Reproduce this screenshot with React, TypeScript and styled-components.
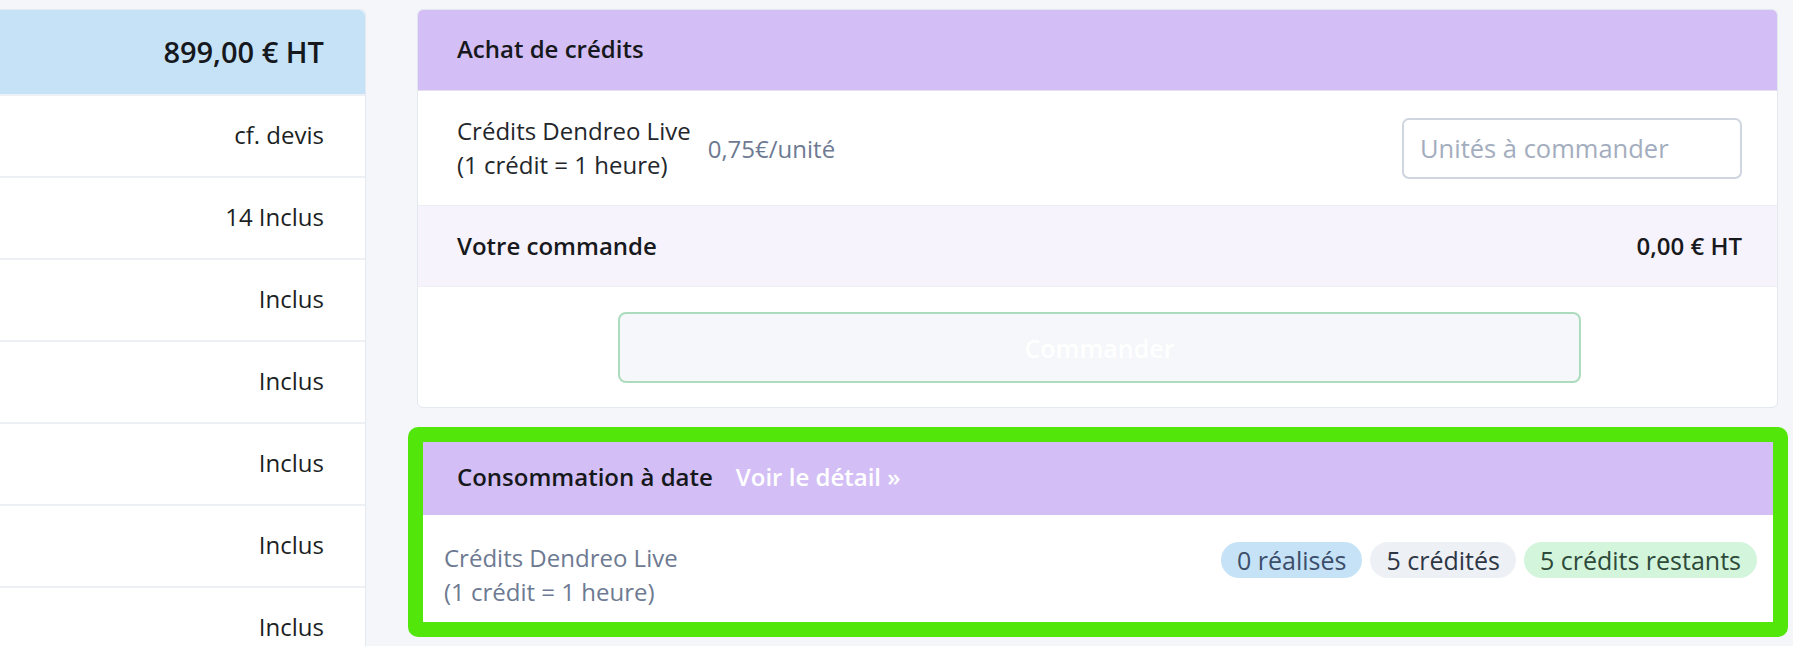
import styled, { createGlobalStyle } from "styled-components"

const GlobalStyle = createGlobalStyle`
  html, body {
    margin: 0;
    padding: 0;
    background: #f4f6f9;
    font-family: "Open Sans", "Noto Sans", Arial, sans-serif;
    color: #1f2329;
    overflow: hidden;
  }
  #root {
    height: 646px;
    overflow: hidden;
  }
`

const Page = styled.div`
  display: flex;
  align-items: flex-start;
  gap: 42px;
  padding-top: 9px;
`

const Tarifs = styled.section`
  width: 365px;
  flex-shrink: 0;
  background: #ffffff;
  border: 1px solid #e3e9f0;
  border-left: none;
  border-radius: 0 6px 0 0;
`

const TarifEntete = styled.div`
  height: 84px;
  box-sizing: border-box;
  background: #c6e2f6;
  display: flex;
  align-items: center;
  justify-content: flex-end;
  padding: 0 41px 2px 0;
  font-size: 29px;
  font-weight: 600;
  color: #15181c;
  border-radius: 0 6px 0 0;
`

const TarifLigne = styled.div`
  height: 80px;
  box-sizing: content-box;
  border-top: 2px solid #edf1f5;
  display: flex;
  align-items: center;
  justify-content: flex-end;
  padding-right: 41px;
  font-size: 24px;
  color: #1c1f24;
  & > span {
    margin-bottom: 4px;
  }
`

const Colonne = styled.div`
  width: 1380px;
  display: flex;
  flex-direction: column;
`

const Carte = styled.section`
  margin: 0 10px 0 9px;
  background: #ffffff;
  border: 1px solid #e4e8ef;
  border-radius: 6px;
  overflow: hidden;
`

const Entete = styled.div`
  height: 81px;
  box-sizing: border-box;
  background: #d3bff5;
  display: flex;
  align-items: center;
  padding: 0 0 4px 39px;
  font-size: 24px;
  font-weight: 600;
  color: #16181c;
  border-bottom: 1px solid #e3e1ef;
`

const LigneProduit = styled.div`
  height: 114px;
  display: flex;
  align-items: center;
  padding: 0 35px 0 39px;
`

const Libelle = styled.div<{ $muet?: boolean }>`
  font-size: 24px;
  line-height: 34px;
  color: ${p => (p.$muet ? "#6d7a92" : "#23262b")};
`

const Prix = styled.span`
  margin-left: 17px;
  font-size: 24px;
  color: #6d7a92;
`

const Champ = styled.input`
  margin-left: auto;
  width: 340px;
  height: 61px;
  box-sizing: border-box;
  border: 2px solid #cfd6e0;
  border-radius: 7px;
  padding: 0 0 0 16px;
  font-family: inherit;
  font-size: 25.5px;
  background: #ffffff;
  outline: none;
  &::placeholder {
    color: #a3adbe;
  }
`

const LigneTotal = styled.div`
  height: 81px;
  box-sizing: border-box;
  background: #f6f3fc;
  border-top: 1px solid #eceef4;
  display: flex;
  align-items: center;
  justify-content: space-between;
  padding: 0 35px 2px 39px;
  font-size: 24px;
  font-weight: 600;
  color: #17191d;
`

const ZoneBouton = styled.div`
  height: 121px;
  border-top: 1px solid #eef0f4;
  box-sizing: border-box;
  display: flex;
  justify-content: center;
  padding: 25px 0 0 4px;
`

const Bouton = styled.button`
  width: 963px;
  height: 71px;
  background: #f5f7fa;
  border: 2px solid #acdcbd;
  border-radius: 8px;
  color: #ffffff;
  font-family: inherit;
  font-size: 25px;
  font-weight: 600;
`

const Encadre = styled.section`
  margin-top: 19px;
  border: 15px solid #52e60a;
  border-radius: 10px;
  background: #ffffff;
`

const EnteteConso = styled.div`
  height: 73px;
  box-sizing: border-box;
  background: #d3bff5;
  display: flex;
  align-items: center;
  padding: 0 0 5px 34px;
  font-size: 24px;
  font-weight: 600;
  color: #16181c;
`

const Lien = styled.a`
  margin-left: 23px;
  color: #ffffff;
  text-decoration: none;
`

const CorpsConso = styled.div`
  height: 107px;
  box-sizing: border-box;
  display: flex;
  align-items: flex-start;
  justify-content: space-between;
  padding: 26px 16px 0 21px;
`

const Pastilles = styled.div`
  display: flex;
  gap: 8px;
  margin-top: 1px;
`

const tons = {
  bleu: { fond: "#c6e2f6", texte: "#3c4e6a" },
  gris: { fond: "#edf0f5", texte: "#2e3645" },
  vert: { fond: "#d3f5dc", texte: "#2e4a39" },
}

const Pastille = styled.span<{ $ton: keyof typeof tons }>`
  height: 36px;
  display: flex;
  align-items: center;
  padding: 0 16px;
  border-radius: 18px;
  font-size: 25px;
  background: ${p => tons[p.$ton].fond};
  color: ${p => tons[p.$ton].texte};
`

const lignes = ["cf. devis", "14 Inclus", "Inclus", "Inclus", "Inclus", "Inclus", "Inclus"]

export default function App() {
  return (
    <>
      <GlobalStyle />
      <Page>
        <Tarifs>
          <TarifEntete>899,00 € HT</TarifEntete>
          {lignes.map((l, i) => (
            <TarifLigne key={i}>
              <span>{l}</span>
            </TarifLigne>
          ))}
        </Tarifs>
        <Colonne>
          <Carte>
            <Entete>Achat de crédits</Entete>
            <LigneProduit>
              <Libelle>
                Crédits Dendreo Live
                <br />
                (1 crédit = 1 heure)
              </Libelle>
              <Prix>0,75€/unité</Prix>
              <Champ placeholder="Unités à commander" />
            </LigneProduit>
            <LigneTotal>
              <span>Votre commande</span>
              <span>0,00 € HT</span>
            </LigneTotal>
            <ZoneBouton>
              <Bouton>Commander</Bouton>
            </ZoneBouton>
          </Carte>
          <Encadre>
            <EnteteConso>
              Consommation à date
              <Lien href="#">Voir le détail »</Lien>
            </EnteteConso>
            <CorpsConso>
              <Libelle $muet>
                Crédits Dendreo Live
                <br />
                (1 crédit = 1 heure)
              </Libelle>
              <Pastilles>
                <Pastille $ton="bleu">0 réalisés</Pastille>
                <Pastille $ton="gris">5 crédités</Pastille>
                <Pastille $ton="vert">5 crédits restants</Pastille>
              </Pastilles>
            </CorpsConso>
          </Encadre>
        </Colonne>
      </Page>
    </>
  )
}
